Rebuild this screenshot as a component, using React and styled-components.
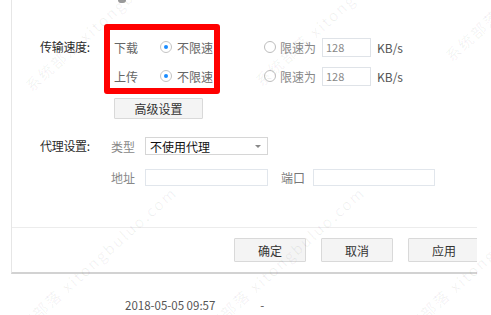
import React from 'react';
import styled, { createGlobalStyle } from 'styled-components';

const GlobalStyle = createGlobalStyle`
  html, body {
    margin: 0;
    padding: 0;
    background: #fff;
  }
  body {
    width: 491px;
    height: 315px;
    overflow: hidden;
    font-family: "Noto Sans CJK SC", "Noto Sans", "Liberation Sans", sans-serif;
    font-size: 12px;
    color: #333;
  }
`;

const Page = styled.div`
  width: 491px;
  height: 315px;
  position: relative;
  overflow: hidden;
`;

const Dialog = styled.div`
  margin-left: 11px;
  width: 465px;
  height: 272px;
  border-left: 1px solid #e6e6e6;
  border-bottom: 2px solid #d2d2d2;
  display: flex;
  flex-direction: column;
  overflow: hidden;
`;

const TopStub = styled.div`
  width: 8px;
  height: 3px;
  margin-left: 106px;
  background: #9a9a9a;
  border-radius: 0 0 4px 4px;
`;

const Body = styled.div`
  flex: 1;
  padding: 21px 0 0 28px;
`;

const Section = styled.div`
  display: flex;
  align-items: flex-start;
`;

const Label = styled.div`
  width: 64px;
  flex: none;
  height: ${(p) => p.$h || 20}px;
  line-height: ${(p) => p.$h || 20}px;
  margin-top: ${(p) => p.$top || 0}px;
  color: #2a2a2a;
  letter-spacing: -0.3px;
`;

const RedBox = styled.div`
  width: 100px;
  border: 6px solid #ff0000;
  border-radius: 3px;
  padding: 7px 0 2px 4px;
  display: flex;
  flex-direction: column;
  gap: 9px;
`;

const Column = styled.div`
  display: flex;
  flex-direction: column;
  gap: 9px;
  margin-left: ${(p) => p.$ml || 0}px;
  padding-top: ${(p) => p.$pt || 0}px;
`;

const Row = styled.div`
  display: flex;
  align-items: center;
  height: ${(p) => p.$h || 20}px;
`;

const Muted = styled.span`
  color: ${(p) => p.$c || '#666'};
  margin-left: ${(p) => p.$ml || 0}px;
  margin-right: ${(p) => p.$mr || 0}px;
  white-space: nowrap;
`;

const Radio = styled.span`
  width: 10px;
  height: 10px;
  border: 1px solid ${(p) => (p.$on ? '#c4c4c4' : '#bdbdbd')};
  border-radius: 50%;
  background: #fff;
  display: inline-flex;
  align-items: center;
  justify-content: center;
  margin-right: ${(p) => p.$mr || 5}px;
  flex: none;

  &::after {
    content: '';
    width: 4px;
    height: 4px;
    border-radius: 50%;
    background: ${(p) => (p.$on ? '#1a8cff' : 'transparent')};
  }
`;

const NumInput = styled.div`
  width: 44px;
  height: 17px;
  border: 1px solid #dfe3e8;
  color: #888;
  font-size: 11px;
  line-height: 17px;
  padding-left: 3px;
  margin: 0 6px 0 6px;
`;

const PlainButton = styled.div`
  width: ${(p) => p.$w || 72}px;
  height: ${(p) => p.$h || 22}px;
  flex: none;
  box-sizing: border-box;
  background: #f4f4f4;
  border: 1px solid #d9d9d9;
  border-radius: 1px;
  display: flex;
  align-items: center;
  justify-content: center;
  color: #333;
`;

const AdvancedRow = styled.div`
  margin: 4px 0 0 74px;
`;

const ProxyBlock = styled.div`
  display: flex;
  flex-direction: column;
  gap: 14px;
  margin-top: 18px;
`;

const Select = styled.div`
  width: 123px;
  height: 18px;
  box-sizing: border-box;
  border: 1px solid #d6d6d6;
  display: flex;
  align-items: center;
  justify-content: space-between;
  padding: 0 6px 0 4px;
  color: #111;
  margin-left: 10px;
`;

const Caret = styled.span`
  width: 0;
  height: 0;
  border-left: 3px solid transparent;
  border-right: 3px solid transparent;
  border-top: 3px solid #888;
`;

const TextField = styled.div`
  width: ${(p) => p.$w || 123}px;
  height: 17px;
  box-sizing: border-box;
  border: 1px solid #e1e6ec;
  margin-left: ${(p) => p.$ml || 0}px;
`;

const Footer = styled.div`
  border-top: 1px solid #ececec;
  padding: 10px 0 10px 222px;
  display: flex;
  gap: 15px;
`;

const Status = styled.div`
  display: flex;
  align-items: center;
  height: 62px;
  padding-left: 125px;
  color: #555;
  font-size: 11.5px;
`;

const Dash = styled.span`
  margin-left: 45px;
`;

const Watermark = styled.div`
  position: absolute;
  left: ${(p) => p.$x}px;
  top: ${(p) => p.$y}px;
  transform: rotate(-42deg);
  transform-origin: left top;
  color: rgba(0, 0, 0, 0.06);
  font-size: 15px;
  letter-spacing: 2px;
  white-space: nowrap;
  pointer-events: none;
`;

const marks = [
  { x: 2, y: 330 },
  { x: 190, y: 330 },
  { x: 390, y: 330 },
  { x: 20, y: 80 },
  { x: 250, y: 75 },
  { x: 440, y: 50 },
];

export default function App() {
  return (
    <Page>
      <GlobalStyle />
      <Dialog>
        <TopStub />
        <Body>
          <Section>
            <Label $top={13}>传输速度:</Label>
            <RedBox>
              <Row>
                <Muted $mr={22}>下载</Muted>
                <Radio $on $mr={5} />
                <Muted>不限速</Muted>
              </Row>
              <Row>
                <Muted $mr={22}>上传</Muted>
                <Radio $on $mr={5} />
                <Muted>不限速</Muted>
              </Row>
            </RedBox>
            <Column $ml={44} $pt={13}>
              <Row>
                <Radio $mr={4} />
                <Muted $c="#888">限速为</Muted>
                <NumInput>128</NumInput>
                <Muted $c="#555">KB/s</Muted>
              </Row>
              <Row>
                <Radio $mr={4} />
                <Muted $c="#888">限速为</Muted>
                <NumInput>128</NumInput>
                <Muted $c="#555">KB/s</Muted>
              </Row>
            </Column>
          </Section>
          <AdvancedRow>
            <PlainButton $w={89} $h={21}>高级设置</PlainButton>
          </AdvancedRow>
          <ProxyBlock>
            <Row $h={18}>
              <Label $h={18}>代理设置:</Label>
              <Muted $c="#888" $ml={7}>类型</Muted>
              <Select>
                <span>不使用代理</span>
                <Caret />
              </Select>
            </Row>
            <Row $h={17}>
              <Label $h={17} />
              <Muted $c="#888" $ml={7}>地址</Muted>
              <TextField $ml={10} />
              <Muted $c="#777" $ml={13}>端口</Muted>
              <TextField $w={122} $ml={8} />
            </Row>
          </ProxyBlock>
        </Body>
        <Footer>
          <PlainButton $h={24}>确定</PlainButton>
          <PlainButton $h={24}>取消</PlainButton>
          <PlainButton $h={24}>应用</PlainButton>
        </Footer>
      </Dialog>
      <Status>
        <span>2018-05-05 09:57</span>
        <Dash>-</Dash>
      </Status>
      {marks.map((m, i) => (
        <Watermark key={i} $x={m.x} $y={m.y}>
          系统部落 xitongbuluo.com
        </Watermark>
      ))}
    </Page>
  );
}
